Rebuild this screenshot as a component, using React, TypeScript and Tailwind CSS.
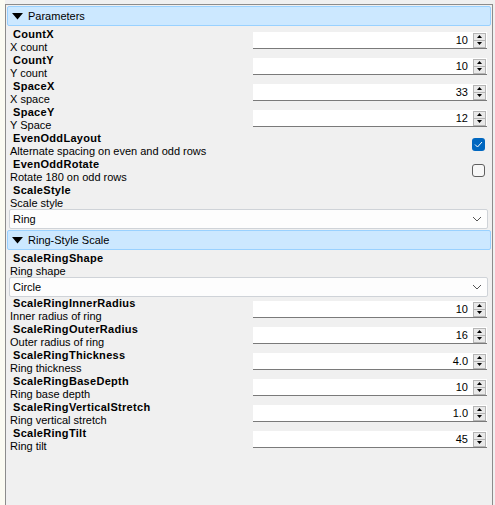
import React from "react";

type Param =
  | { kind: "spin"; name: string; desc: string; value: string }
  | { kind: "check"; name: string; desc: string; checked: boolean }
  | { kind: "combo"; name: string; desc: string; value: string };

const mainParams: Param[] = [
  { kind: "spin", name: "CountX", desc: "X count", value: "10" },
  { kind: "spin", name: "CountY", desc: "Y count", value: "10" },
  { kind: "spin", name: "SpaceX", desc: "X space", value: "33" },
  { kind: "spin", name: "SpaceY", desc: "Y Space", value: "12" },
  { kind: "check", name: "EvenOddLayout", desc: "Alternate spacing on even and odd rows", checked: true },
  { kind: "check", name: "EvenOddRotate", desc: "Rotate 180 on odd rows", checked: false },
  { kind: "combo", name: "ScaleStyle", desc: "Scale style", value: "Ring" },
];

const ringParams: Param[] = [
  { kind: "combo", name: "ScaleRingShape", desc: "Ring shape", value: "Circle" },
  { kind: "spin", name: "ScaleRingInnerRadius", desc: "Inner radius of ring", value: "10" },
  { kind: "spin", name: "ScaleRingOuterRadius", desc: "Outer radius of ring", value: "16" },
  { kind: "spin", name: "ScaleRingThickness", desc: "Ring thickness", value: "4.0" },
  { kind: "spin", name: "ScaleRingBaseDepth", desc: "Ring base depth", value: "10" },
  { kind: "spin", name: "ScaleRingVerticalStretch", desc: "Ring vertical stretch", value: "1.0" },
  { kind: "spin", name: "ScaleRingTilt", desc: "Ring tilt", value: "45" },
];

function GroupHeader({ title }: { title: string }) {
  return (
    <div className="h-[20px] flex items-center bg-[#cce8ff] border border-[#99d1ff] rounded-[2px] pl-[4px]">
      <svg width="11" height="7" viewBox="0 0 11 7" className="mr-[5px]">
        <polygon points="0,0 11,0 5.5,6.5" fill="#000" />
      </svg>
      <span>{title}</span>
    </div>
  );
}

function SpinBox({ value }: { value: string }) {
  return (
    <div className="w-[234px] h-[17px] bg-white border-b border-[#7a7a7a] flex items-center justify-end">
      <span className="mr-[5px] leading-none">{value}</span>
      <div className="w-[13px] h-[15px] mr-[1px] border border-[#b5b5b5] bg-[#e9e9e9] flex flex-col">
        <div className="flex-1 flex items-center justify-center border-b border-[#b5b5b5]">
          <svg width="5" height="3" viewBox="0 0 5 3">
            <polygon points="0,3 5,3 2.5,0" fill="#000" />
          </svg>
        </div>
        <div className="flex-1 flex items-center justify-center">
          <svg width="5" height="3" viewBox="0 0 5 3">
            <polygon points="0,0 5,0 2.5,3" fill="#000" />
          </svg>
        </div>
      </div>
    </div>
  );
}

function CheckBox({ checked }: { checked: boolean }) {
  if (checked) {
    return (
      <div className="w-[13px] h-[13px] rounded-[3px] bg-[#0067c0] flex items-center justify-center">
        <svg width="9" height="7" viewBox="0 0 9 7">
          <polyline points="1,3.5 3.5,6 8,1" fill="none" stroke="#fff" strokeWidth="1" />
        </svg>
      </div>
    );
  }
  return <div className="w-[13px] h-[13px] rounded-[3px] border border-[#5f5f5f] bg-[#f7f7f7]" />;
}

function ComboBox({ value }: { value: string }) {
  return (
    <div className="mx-[2px] mr-[3px] h-[20px] bg-[#fdfdfd] border border-[#cfd3d8] rounded-[2px] flex items-center justify-between pl-[3px] pr-[5px]">
      <span>{value}</span>
      <svg width="10" height="6" viewBox="0 0 10 6">
        <polyline points="1,1 5,5 9,1" fill="none" stroke="#555" strokeWidth="1" />
      </svg>
    </div>
  );
}

function ParamRow({ p }: { p: Param }) {
  if (p.kind === "combo") {
    return (
      <div>
        <div className="h-[13px] pl-[6px] font-bold tracking-[0.3px]">{p.name}</div>
        <div className="h-[12px] pl-[3px]">{p.desc}</div>
        <ComboBox value={p.value} />
      </div>
    );
  }
  return (
    <div className="h-[26px] flex items-center">
      <div className="flex-1">
        <div className="h-[13px] pl-[6px] font-bold tracking-[0.3px]">{p.name}</div>
        <div className="h-[13px] pl-[3px] whitespace-nowrap">{p.desc}</div>
      </div>
      {p.kind === "spin" ? (
        <div className="mr-[4px] -mt-[1px]">
          <SpinBox value={p.value} />
        </div>
      ) : (
        <div className="mr-[6px] -mt-[1px]">
          <CheckBox checked={p.checked} />
        </div>
      )}
    </div>
  );
}

export default function App() {
  return (
    <div
      className="w-[495px] h-[505px] bg-[#f0f0f0] flex overflow-hidden text-[11px] leading-[13px] text-black"
      style={{ fontFamily: '"Liberation Sans", Arial, sans-serif' }}
    >
      <div className="w-[5px] bg-[#fbfbf2]" />
      <div className="flex-1 mt-[4px] mr-[2px] border-l border-t border-r border-[#8c8c8c] p-[1px]">
        <GroupHeader title="Parameters" />
        <div className="mt-[2px]">
          {mainParams.map((p) => (
            <ParamRow key={p.name} p={p} />
          ))}
        </div>
        <div className="mt-[1px]">
          <GroupHeader title="Ring-Style Scale" />
        </div>
        <div className="mt-[2px]">
          {ringParams.map((p) => (
            <ParamRow key={p.name} p={p} />
          ))}
        </div>
      </div>
    </div>
  );
}
